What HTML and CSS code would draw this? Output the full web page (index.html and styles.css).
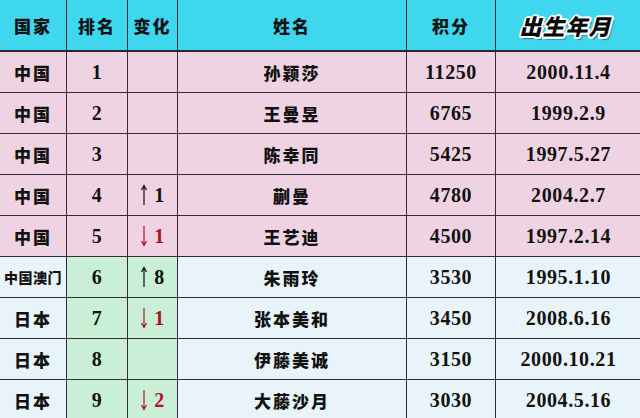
FILE: index.html
```html
<!DOCTYPE html>
<html lang="zh">
<head>
<meta charset="utf-8">
<link rel="stylesheet" href="styles.css">
</head>
<body>
<table class="rank">
  <colgroup>
    <col class="c-country"><col class="c-rank"><col class="c-change"><col class="c-name"><col class="c-pts"><col class="c-birth">
  </colgroup>
  <thead>
    <tr>
      <th>国家</th><th>排名</th><th>变化</th><th>姓名</th><th>积分</th><th><span class="fancy">出生年月</span></th>
    </tr>
  </thead>
  <tbody>
    <tr class="cn"><td class="zh">中国</td><td class="num">1</td><td class="chg"></td><td class="zh">孙颖莎</td><td class="num">11250</td><td class="num">2000.11.4</td></tr>
    <tr class="cn"><td class="zh">中国</td><td class="num">2</td><td class="chg"></td><td class="zh">王曼昱</td><td class="num">6765</td><td class="num">1999.2.9</td></tr>
    <tr class="cn"><td class="zh">中国</td><td class="num">3</td><td class="chg"></td><td class="zh">陈幸同</td><td class="num">5425</td><td class="num">1997.5.27</td></tr>
    <tr class="cn"><td class="zh">中国</td><td class="num">4</td><td class="chg"><svg class="arr" viewBox="0 0 8 22" width="8" height="22"><path d="M4 21V2M1.5 6L4 1.5 6.5 6" fill="none" stroke="currentColor" stroke-width="1.2"/></svg>1</td><td class="zh">蒯曼</td><td class="num">4780</td><td class="num">2004.2.7</td></tr>
    <tr class="cn"><td class="zh">中国</td><td class="num">5</td><td class="chg down"><svg class="arr" viewBox="0 0 8 22" width="8" height="22"><path d="M4 1v19M1.5 16L4 20.5 6.5 16" fill="none" stroke="currentColor" stroke-width="1.2"/></svg>1</td><td class="zh">王艺迪</td><td class="num">4500</td><td class="num">1997.2.14</td></tr>
    <tr class="ot"><td class="zh small">中国澳门</td><td class="num g">6</td><td class="chg g"><svg class="arr" viewBox="0 0 8 22" width="8" height="22"><path d="M4 21V2M1.5 6L4 1.5 6.5 6" fill="none" stroke="currentColor" stroke-width="1.2"/></svg>8</td><td class="zh">朱雨玲</td><td class="num">3530</td><td class="num">1995.1.10</td></tr>
    <tr class="ot"><td class="zh">日本</td><td class="num g">7</td><td class="chg g down"><svg class="arr" viewBox="0 0 8 22" width="8" height="22"><path d="M4 1v19M1.5 16L4 20.5 6.5 16" fill="none" stroke="currentColor" stroke-width="1.2"/></svg>1</td><td class="zh">张本美和</td><td class="num">3450</td><td class="num">2008.6.16</td></tr>
    <tr class="ot"><td class="zh">日本</td><td class="num g">8</td><td class="chg g"></td><td class="zh">伊藤美诚</td><td class="num">3150</td><td class="num">2000.10.21</td></tr>
    <tr class="ot"><td class="zh">日本</td><td class="num g">9</td><td class="chg g down"><svg class="arr" viewBox="0 0 8 22" width="8" height="22"><path d="M4 1v19M1.5 16L4 20.5 6.5 16" fill="none" stroke="currentColor" stroke-width="1.2"/></svg>2</td><td class="zh">大藤沙月</td><td class="num">3030</td><td class="num">2004.5.16</td></tr>
  </tbody>
</table>
</body>
</html>
```
FILE: styles.css
```css
html, body {
  margin: 0;
  padding: 0;
  background: #e8f4fa;
  overflow: hidden;
}
.rank {
  border-collapse: collapse;
  table-layout: fixed;
  width: 642px;
  margin-left: -1px;
  margin-top: -1px;
  color: #121212;
}
.c-country { width: 67px; }
.c-rank { width: 61px; }
.c-change { width: 50px; }
.c-name { width: 229px; }
.c-pts { width: 89px; }
.c-birth { width: 146px; }

.rank th, .rank td {
  border: 1.6px solid #352a38;
  text-align: center;
  padding: 0;
  white-space: nowrap;
  overflow: hidden;
}
.rank thead th {
  height: 50px;
  background: #3ed7ee;
  font-family: "Noto Sans CJK SC", sans-serif;
  font-weight: 900;
  font-size: 17px;
  letter-spacing: 2px;
  border-bottom: 2px solid #2a2636;
}
.rank tbody td { height: 40px; }
.cn td { background: #efd3e3; }
.ot td { background: #e8f4fa; }
.ot td.g { background: #c9f0d6; }

.zh {
  font-family: "Noto Sans CJK SC", sans-serif;
  font-weight: 900;
  font-size: 17px;
  letter-spacing: 2px;
}
.zh.small { font-size: 14px; letter-spacing: 0.5px; }
.num, .chg {
  font-family: "Liberation Serif", "DejaVu Serif", serif;
  font-weight: 700;
  font-size: 20px;
  letter-spacing: 0.6px;
}
.chg .arr {
  vertical-align: middle;
  margin-right: 6px;
  margin-top: -3px;
}
.chg.down { color: #b0112a; }
.fancy {
  display: inline-block;
  font-family: "Noto Sans CJK SC", sans-serif;
  font-weight: 900;
  font-size: 22px;
  letter-spacing: 1px;
  color: #0a0a0a;
  transform: skewX(-14deg);
  text-shadow:
    2px 0 0 #fff, -2px 0 0 #fff, 0 2px 0 #fff, 0 -2px 0 #fff,
    1.5px 1.5px 0 #fff, -1.5px -1.5px 0 #fff, 1.5px -1.5px 0 #fff, -1.5px 1.5px 0 #fff,
    3px 3px 1px rgba(0,0,0,0.45);
}
```
